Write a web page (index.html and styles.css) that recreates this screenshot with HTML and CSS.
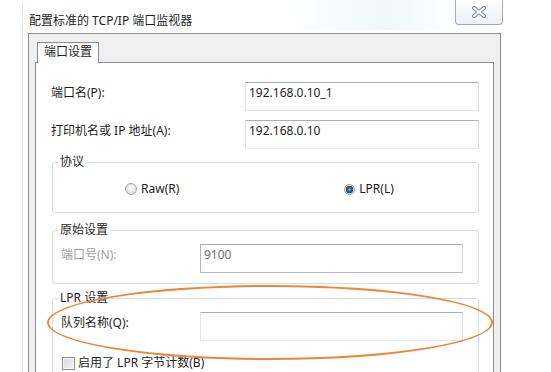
FILE: index.html
```html
<!DOCTYPE html>
<html lang="zh-CN">
  <head>
    <meta charset="UTF-8" />
    <meta name="viewport" content="width=device-width, initial-scale=1.0" />
    <title>配置标准的 TCP/IP 端口监视器</title>
    <link rel="stylesheet" href="styles.css">
  </head>
  <body>
    <div class="window">
      <div class="titlebar">
        <span class="title">配置标准的 TCP/IP 端口监视器</span>
        <span class="close">
          <svg width="16" height="12" viewBox="0 0 16 12">
            <path d="M3 2 L13 10 M13 2 L3 10" stroke="#7c8590" stroke-width="4" stroke-linecap="round" />
            <path d="M3 2 L13 10 M13 2 L3 10" stroke="#fbfcfd" stroke-width="2" stroke-linecap="round" />
          </svg>
        </span>
      </div>
      <div class="client">
        <div class="tabs"><span class="tab">端口设置</span></div>
        <div class="panel">
          <div class="row">
            <span class="label">端口名(P):</span>
            <span class="input">192.168.0.10_1</span>
          </div>
          <div class="row">
            <span class="label">打印机名或 IP 地址(A):</span>
            <span class="input">192.168.0.10</span>
          </div>

          <div class="group group-protocol">
            <div class="group-title">协议</div>
            <div class="radios">
              <span class="radio"><span class="radio-dot"></span>Raw(R)</span>
              <span class="radio"><span class="radio-dot checked"></span>LPR(L)</span>
            </div>
          </div>

          <div class="group group-raw">
            <div class="group-title">原始设置</div>
            <div class="row">
              <span class="label disabled">端口号(N):</span>
              <span class="input wide disabled">9100</span>
            </div>
          </div>

          <div class="group group-lpr">
            <div class="group-title">LPR 设置</div>
            <div class="row">
              <span class="label">队列名称(Q):</span>
              <span class="input wide"></span>
            </div>
            <div class="check-row">
              <span class="checkbox"></span>启用了 LPR 字节计数(B)
            </div>
          </div>
        </div>
      </div>
    </div>
    <div class="highlight"></div>
  </body>
</html>
```

FILE: styles.css
```css
body {
  margin: 0;
  background: #fff;
  font-family: "Noto Sans", "Noto Sans CJK SC", sans-serif;
  font-size: 12px;
  line-height: 16px;
  color: #1e1e1e;
  overflow: hidden;
}
.window {
  margin-left: 22px;
  width: 473px;
  padding: 0 5px;
  border-left: 1px solid #e4e7ea;
  border-top-left-radius: 6px;
  background: linear-gradient(to right, #fff 55%, #eef7f9 75%, #fff 90%) top / 100% 30px no-repeat;
}
.titlebar {
  display: flex;
  height: 33px;
}
.title {
  padding: 13px 0 0 1px;
}
.close {
  margin-left: auto;
  margin-right: -2px;
  width: 46px;
  height: 24px;
  border: 1px solid #a3abb4;
  border-top: none;
  border-radius: 0 0 4px 4px;
  background: linear-gradient(#fdfdfe, #eef1f4);
  display: flex;
  align-items: center;
  justify-content: center;
}
.client {
  border: 1px solid #8e8e8e;
  border-bottom: none;
  background: #f0f0f0;
  padding: 8px 6px 0;
}
.tabs {
  display: flex;
  padding-left: 2px;
}
.tab {
  position: relative;
  z-index: 1;
  background: #fff;
  border: 1px solid #898c95;
  border-bottom: none;
  padding: 1px 6px 3px;
  margin-bottom: -1px;
}
.panel {
  background: #fff;
  border: 1px solid #898c95;
  padding: 19px 14px 60px 15px;
}
.row {
  display: flex;
  align-items: flex-start;
  justify-content: space-between;
}
.row + .row {
  margin-top: 9px;
}
.label {
  padding-top: 3px;
}
.label.disabled {
  color: #a0a0a0;
}
.input {
  box-sizing: border-box;
  width: 234px;
  height: 29px;
  padding: 2px 3px 0;
  border: 1px solid;
  border-color: #abadb3 #dbdfe6 #e3e9ef #e2e3ea;
  color: #1e1e1e;
}
.input.wide {
  width: 263px;
}
.input.disabled {
  border-color: #adadad #d9d9d9 #b9b9b9 #b3b3b3;
  color: #6d6d6d;
}
.group {
  margin: 13px 0 0 1px;
  border: 1px solid #d5dfe5;
  border-radius: 3px;
  padding: 0 15px 15px 8px;
}
.group-raw {
  margin-top: 17px;
  padding-bottom: 10px;
}
.group-lpr {
  margin-top: 14px;
}
.group .row {
  margin-top: 6px;
}
.group-title {
  width: fit-content;
  margin: -9px 0 0 -3px;
  padding: 0 2px;
  background: #fff;
}
.radios {
  display: flex;
  gap: 165px;
  margin-top: 11px;
  padding-left: 64px;
}
.radio {
  display: flex;
  align-items: center;
}
.radio-dot {
  box-sizing: border-box;
  width: 12px;
  height: 12px;
  margin-right: 4px;
  border: 1px solid #a2a2a2;
  border-radius: 50%;
  background: radial-gradient(circle at 50% 40%, #fbfbfb, #d6d6d6);
}
.radio-dot.checked {
  width: 11px;
  height: 11px;
  border-color: #8c99a8;
  background: radial-gradient(circle, #7fa9d6 0, #2a5686 2.5px, #1f3f66 3.5px, #d7e3ef 4px, #f6f8fb 5.5px);
}
.check-row {
  display: flex;
  align-items: center;
  margin-top: 14px;
}
.checkbox {
  box-sizing: border-box;
  width: 13px;
  height: 13px;
  margin: 0 3px 0 1px;
  border: 1px solid #8f8f8f;
  background: linear-gradient(135deg, #d9d9d9, #f4f4f4);
  box-shadow: inset 0 0 0 1px #f7f7f7;
}
.highlight {
  position: absolute;
  left: 47px;
  top: 285px;
  width: 446px;
  height: 75px;
  box-sizing: border-box;
  border: 2px solid #ee8436;
  border-radius: 50%;
}
```
